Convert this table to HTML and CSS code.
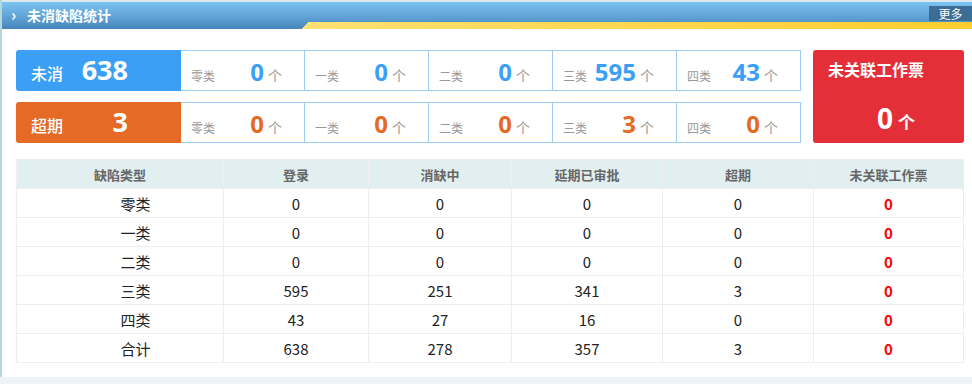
FILE: index.html
```html
<!DOCTYPE html>
<html lang="zh-CN">
<head>
    <meta charset="UTF-8">
    <title>未消缺陷统计</title>
    <link rel="stylesheet" href="styles.css">
</head>
<body>
    <div class="panel">
        <div class="panel-head">
            <span class="arrow">›</span>
            <span class="title">未消缺陷统计</span>
            <a class="more">更多</a>
        </div>

        <div class="panel-body">
            <div class="stats">
                <div class="stat-rows">
                    <div class="stat-row blue">
                        <div class="row-head"><span class="row-name">未消</span><span class="row-num">638</span></div>
                        <div class="cell"><span class="cell-name">零类</span><span class="cell-num">0</span><span class="unit">个</span></div>
                        <div class="cell"><span class="cell-name">一类</span><span class="cell-num">0</span><span class="unit">个</span></div>
                        <div class="cell"><span class="cell-name">二类</span><span class="cell-num">0</span><span class="unit">个</span></div>
                        <div class="cell"><span class="cell-name">三类</span><span class="cell-num">595</span><span class="unit">个</span></div>
                        <div class="cell"><span class="cell-name">四类</span><span class="cell-num">43</span><span class="unit">个</span></div>
                    </div>
                    <div class="stat-row orange">
                        <div class="row-head"><span class="row-name">超期</span><span class="row-num">3</span></div>
                        <div class="cell"><span class="cell-name">零类</span><span class="cell-num">0</span><span class="unit">个</span></div>
                        <div class="cell"><span class="cell-name">一类</span><span class="cell-num">0</span><span class="unit">个</span></div>
                        <div class="cell"><span class="cell-name">二类</span><span class="cell-num">0</span><span class="unit">个</span></div>
                        <div class="cell"><span class="cell-name">三类</span><span class="cell-num">3</span><span class="unit">个</span></div>
                        <div class="cell"><span class="cell-name">四类</span><span class="cell-num">0</span><span class="unit">个</span></div>
                    </div>
                </div>
                <div class="stat-total">
                    <div class="total-name">未关联工作票</div>
                    <div class="total-value"><span class="total-num">0</span><span class="total-unit">个</span></div>
                </div>
            </div>

            <table class="grid">
                <colgroup>
                    <col style="width:207px">
                    <col style="width:145px">
                    <col style="width:143px">
                    <col style="width:151px">
                    <col style="width:151px">
                    <col style="width:150px">
                </colgroup>
                <thead>
                    <tr><th>缺陷类型</th><th>登录</th><th>消缺中</th><th>延期已审批</th><th>超期</th><th>未关联工作票</th></tr>
                </thead>
                <tbody>
                    <tr><td class="type">零类</td><td>0</td><td>0</td><td>0</td><td>0</td><td class="red">0</td></tr>
                    <tr><td class="type">一类</td><td>0</td><td>0</td><td>0</td><td>0</td><td class="red">0</td></tr>
                    <tr><td class="type">二类</td><td>0</td><td>0</td><td>0</td><td>0</td><td class="red">0</td></tr>
                    <tr><td class="type">三类</td><td>595</td><td>251</td><td>341</td><td>3</td><td class="red">0</td></tr>
                    <tr><td class="type">四类</td><td>43</td><td>27</td><td>16</td><td>0</td><td class="red">0</td></tr>
                    <tr><td class="type">合计</td><td>638</td><td>278</td><td>357</td><td>3</td><td class="red">0</td></tr>
                </tbody>
            </table>
        </div>
    </div>
    <div class="foot"></div>
</body>
</html>
```

FILE: styles.css
```css
body {
    margin: 0;
    background: #fff;
    font-family: "Noto Sans CJK SC", "Noto Sans", sans-serif;
    color: #222;
}

.panel {
    height: 377px;
    border-left: 2px solid #b6d8dd;
    box-sizing: border-box;
}

.panel-head {
    height: 29px;
    box-sizing: border-box;
    border-top: 2px solid #dde7ec;
    display: flex;
    align-items: flex-start;
    background:
        linear-gradient(135deg, transparent 0 6px, #ffe173 6px, #fbcd2e) right bottom / 672px 7px no-repeat,
        linear-gradient(#7cc4f1, #5d9fd3 60%, #4786bb);
}

.arrow {
    color: #fff;
    font-weight: bold;
    font-size: 16px;
    line-height: 24px;
    margin-left: 9px;
    width: 16px;
}

.title {
    color: #fff;
    font-weight: bold;
    font-size: 14px;
    line-height: 26px;
}

.more {
    margin-left: auto;
    margin-top: 4px;
    width: 43px;
    height: 15px;
    background: #3c6d95;
    color: #fff;
    font-size: 12px;
    line-height: 15px;
    text-align: center;
}

.panel-body {
    padding: 21px 7px 0 14px;
}

.stats {
    display: flex;
    gap: 12px;
}

.stat-rows {
    display: flex;
    flex-direction: column;
    gap: 11px;
}

.stat-row {
    display: grid;
    grid-template-columns: 165px repeat(5, 124px);
    height: 41px;
}

.row-head {
    display: flex;
    align-items: center;
    padding-left: 15px;
    color: #fff;
    border-radius: 3px 0 0 3px;
}

.blue .row-head { background: #3c9ff6; }
.orange .row-head { background: #e46a25; }

.row-name {
    width: 34px;
    font-size: 16px;
    font-weight: 500;
    padding-top: 5px;
}

.row-num {
    width: 63px;
    text-align: right;
    font-size: 27px;
    font-weight: bold;
    font-family: "Open Sans", "Noto Sans", sans-serif;
    margin-top: -2px;
}

.cell {
    display: flex;
    align-items: baseline;
    box-sizing: border-box;
    border: 1px solid #9dcbf1;
    border-left: none;
    padding: 4px 22px 0 10px;
}

.cell-name {
    font-size: 12px;
    color: #999;
    margin-right: auto;
}

.cell-num {
    font-size: 24px;
    font-weight: bold;
    font-family: "Open Sans", "Noto Sans", sans-serif;
    line-height: 34px;
}

.blue .cell-num { color: #3c9ff6; }
.orange .cell-num { color: #e46a25; }

.unit {
    font-size: 14px;
    color: #999;
    margin-left: 4px;
}

.stat-total {
    width: 151px;
    height: 93px;
    background: #e52f38;
    border-radius: 3px;
    color: #fff;
    box-sizing: border-box;
    padding: 7px 0 0 15px;
}

.total-name {
    font-size: 16px;
    font-weight: bold;
}

.total-value {
    display: flex;
    align-items: baseline;
    justify-content: center;
    margin-top: 18px;
}

.total-num {
    font-size: 28px;
    font-weight: bold;
    font-family: "Open Sans", "Noto Sans", sans-serif;
}

.total-unit {
    font-size: 17px;
    font-weight: bold;
    margin-left: 5px;
}

.grid {
    margin-top: 16px;
    width: 947px;
    border-collapse: collapse;
    table-layout: fixed;
}

.grid th,
.grid td {
    border: 1px solid #eeeeee;
    height: 28px;
    padding: 0;
    text-align: center;
}

.grid th {
    background: #e1eff1;
    color: #666;
    font-size: 13px;
    font-weight: bold;
}

.grid td {
    font-size: 15px;
    color: #222;
}

.grid td.type {
    padding-left: 31px;
}

.grid td.red {
    color: #ff0000;
    font-weight: bold;
}

.foot {
    height: 7px;
    background: #edf4f8;
}
```
